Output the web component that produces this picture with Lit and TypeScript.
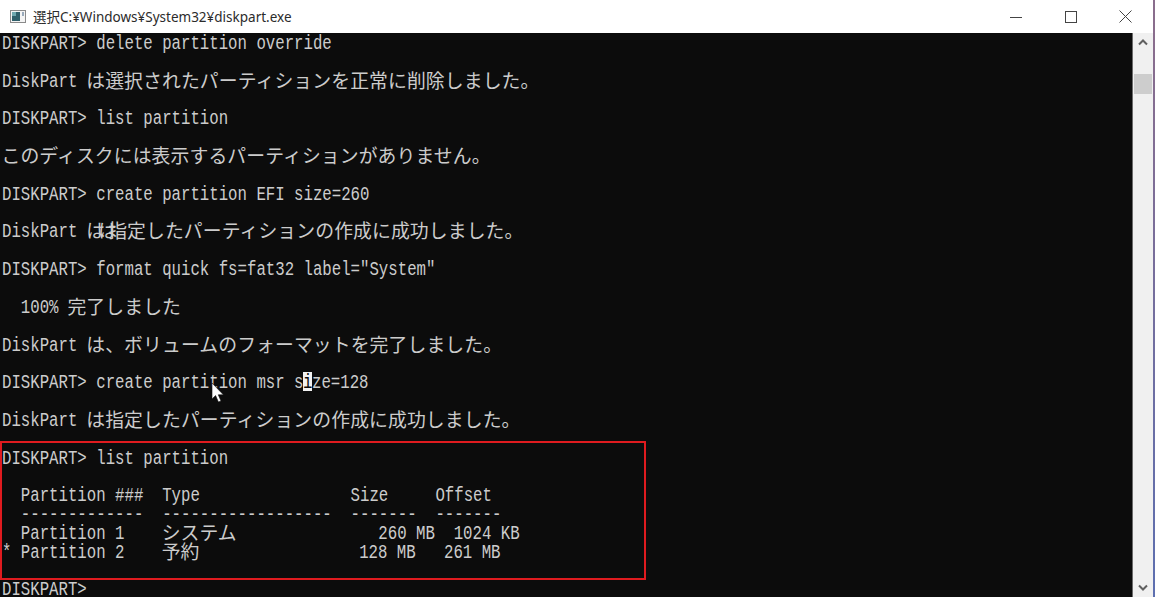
import { LitElement, html, css } from "lit";
import { customElement } from "lit/decorators.js";

const CW = 9.42;
const lines: string[] = [
  "DISKPART> delete partition override",
  "",
  "DiskPart は選択されたパーティションを正常に削除しました。",
  "",
  "DISKPART> list partition",
  "",
  "このディスクには表示するパーティションがありません。",
  "",
  "DISKPART> create partition EFI size=260",
  "",
  "@glitch",
  "",
  "DISKPART> format quick fs=fat32 label=\"System\"",
  "",
  "  100% 完了しました",
  "",
  "DiskPart は、ボリュームのフォーマットを完了しました。",
  "",
  "@sel",
  "",
  "DiskPart は指定したパーティションの作成に成功しました。",
  "",
  "DISKPART> list partition",
  "",
  "  Partition ###  Type                Size     Offset",
  "  -------------  ------------------  -------  -------",
  "  Partition 1    システム               260 MB  1024 KB",
  "* Partition 2    予約                 128 MB   261 MB",
  "",
  "DISKPART>",
];

function runs(s: string) {
  const parts = s.match(/[\x00-\x7f]+|[^\x00-\x7f]+/g) ?? [];
  return parts.map((p) => {
    if (p.charCodeAt(0) < 128) {
      return html`<span class="cell" style="width:${p.length * CW}px"><span class="latin">${p}</span></span>`;
    }
    return html`<span class="cjk">${p}</span>`;
  });
}

@customElement("app-root")
export class AppRoot extends LitElement {
  static styles = css`
    :host { display: block; width: 1155px; height: 597px; overflow: hidden; position: relative; background: #fff; }
    .title { height: 33px; display: flex; align-items: center; background: #fff; }
    .appicon { margin-left: 10px; width: 16px; height: 16px; flex: none; }
    .caption { margin-left: 7px; padding-bottom: 1px; font: 13.5px "Noto Sans", "Noto Sans CJK JP", sans-serif; color: #2b2b2b; white-space: nowrap; }
    .spacer { flex: 1; }
    .wbtn { width: 55px; height: 33px; flex: none; display: flex; align-items: center; justify-content: center; }
    .wbtns { display: flex; margin-right: 2px; }
    .body { display: flex; height: 564px; }
    .console { width: 1132px; flex: none; background: #0c0c0c; overflow: hidden; position: relative; padding-left: 1.5px; box-sizing: border-box; }
    .row { height: 18.85px; white-space: pre; color: #cccccc; line-height: 18.85px; display: flex; align-items: center; }
    .cell { display: inline-block; height: 18.85px; flex: none; overflow: visible; }
    .latin { display: inline-block; font: 20px/18.85px "Liberation Mono", monospace; transform: translateY(2px) scaleX(0.785); transform-origin: left center; white-space: pre; }
    .cjk { font: 18.84px/18.85px "Noto Sans CJK JP", sans-serif; letter-spacing: 0.1px; white-space: pre; flex: none; }
    .over { margin-right: -7px; }
    .glitch-tail { margin-left: -2px; }
    .sel { background: #f2f2f2; color: #0c0c0c; display: inline-flex; flex: none; }
    .bar { width: 21px; flex: none; background: #f0f0f0; border-left: 1px solid #6b6b6b; position: relative; display: flex; flex-direction: column; align-items: center; box-sizing: border-box; }
    .arrow { height: 19px; flex: none; display: flex; align-items: center; justify-content: center; }
    .thumb { width: 18px; height: 20px; background: #cdcdcd; margin-top: 22px; flex: none; }
    .edge { width: 2px; flex: none; background: linear-gradient(#8a6d8d, #5d6fb0); }
    .redbox { position: absolute; left: 0; top: 408px; width: 646px; height: 139px; border: 2px solid #e01b1f; box-sizing: border-box; }
    .cursor { position: absolute; left: 211px; top: 350px; }
    .edge-top { position: absolute; right: 0; top: 0; width: 2px; height: 33px; background: #8a6d8d; }
  `;

  private renderRow(l: string) {
    if (l === "@glitch") {
      return html`${runs("DiskPart ")}<span class="cjk over">は</span><span class="cjk over">は</span><span class="cjk glitch-tail">指定したパーティションの作成に成功しました。</span>`;
    }
    if (l === "@sel") {
      return html`${runs("DISKPART> create partition msr s")}<span class="sel">${runs("i")}</span>${runs("ze=128")}`;
    }
    return runs(l);
  }

  render() {
    return html`
      <div class="title">
        <svg class="appicon" viewBox="0 0 16 16">
          <rect x="0.5" y="1.5" width="15" height="12" fill="#f4f4f4" stroke="#8a8a8a"/>
          <rect x="2" y="3" width="8" height="9" fill="#2f5f6a"/>
          <rect x="2" y="3" width="4" height="4" fill="#6fa7ae"/>
          <rect x="12" y="3" width="2" height="4" fill="#9ab"/>
        </svg>
        <span class="caption">選択C:¥Windows¥System32¥diskpart.exe</span>
        <span class="spacer"></span>
        <div class="wbtns">
          <span class="wbtn"><svg width="12" height="12" viewBox="0 0 12 12"><path d="M0 6.5H12" stroke="#444" stroke-width="1"/></svg></span>
          <span class="wbtn"><svg width="12" height="12" viewBox="0 0 12 12"><rect x="0.5" y="0.5" width="11" height="11" fill="none" stroke="#444"/></svg></span>
          <span class="wbtn"><svg width="13" height="13" viewBox="0 0 13 13"><path d="M0.5 0.5L12.5 12.5M12.5 0.5L0.5 12.5" stroke="#444" stroke-width="1"/></svg></span>
        </div>
        <div class="edge-top"></div>
      </div>
      <div class="body">
        <div class="console">
          ${lines.map((l) => html`<div class="row">${this.renderRow(l)}</div>`)}
          <div class="redbox"></div>
          <svg class="cursor" width="14" height="20" viewBox="0 0 14 20">
            <path d="M1 0V16L4.6 12.6L7.4 19L10 18L7.3 11.8H12.4Z" fill="#fff" stroke="#111" stroke-width="0.6"/>
          </svg>
        </div>
        <div class="bar">
          <div class="arrow"><svg width="10" height="7" viewBox="0 0 10 7"><path d="M1 5.5L5 1.5L9 5.5" fill="none" stroke="#606060" stroke-width="2"/></svg></div>
          <div class="thumb"></div>
          <div class="spacer"></div>
          <div class="arrow"><svg width="10" height="7" viewBox="0 0 10 7"><path d="M1 1.5L5 5.5L9 1.5" fill="none" stroke="#606060" stroke-width="2"/></svg></div>
        </div>
        <div class="edge"></div>
      </div>
    `;
  }
}
